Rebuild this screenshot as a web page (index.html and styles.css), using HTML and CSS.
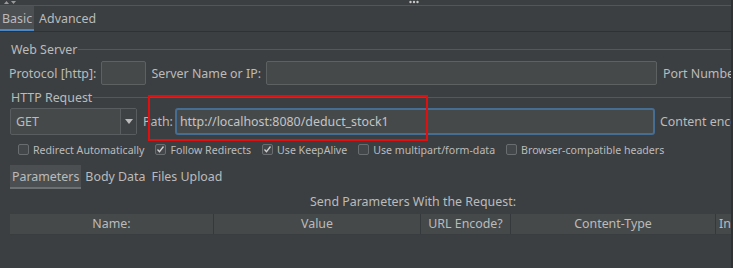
FILE: index.html
```html
<!DOCTYPE html>
<html>
<head>
<meta charset="utf-8">
<link rel="stylesheet" href="styles.css">
</head>
<body>
<div class="app">
  <div class="topbar">
    <svg class="arrows" width="12" height="5" viewBox="0 0 12 5"><path d="M0 4L2.5 1L5 4z" fill="#9a9a9a"/><path d="M7 1h5L9.5 4z" fill="#9a9a9a"/></svg>
    <svg class="dots" width="10" height="4" viewBox="0 0 10 4"><circle cx="1.5" cy="2" r="1.2" fill="#c8c8c8"/><circle cx="5" cy="2" r="1.2" fill="#c8c8c8"/><circle cx="8.5" cy="2" r="1.2" fill="#c8c8c8"/></svg>
  </div>
  <div class="tabs">
    <div class="tab active">Basic</div>
    <div class="tab">Advanced</div>
  </div>
  <div class="group">
    <div class="legend first"><span>Web Server</span><i></i></div>
    <div class="row">
      <span class="lbl">Protocol [http]:</span>
      <span class="input proto"></span>
      <span class="lbl">Server Name or IP:</span>
      <span class="input server"></span>
      <span class="lbl">Port Number:</span>
    </div>
  </div>
  <div class="group">
    <div class="legend second"><span>HTTP Request</span><i></i></div>
    <div class="row row2">
      <div class="select"><span class="sel-text">GET</span><span class="sel-arrow"><svg width="8" height="5" viewBox="0 0 8 5"><path d="M0 0h8L4 5z" fill="#bbbbbb"/></svg></span></div>
      <span class="lbl path-lbl">Path:</span>
      <span class="input path">http://localhost:8080/deduct_stock1</span>
      <span class="lbl">Content encoding:</span>
      <div class="highlight"></div>
    </div>
    <div class="checks">
      <label class="chk"><span class="box"></span>Redirect Automatically</label>
      <label class="chk"><span class="box on"><svg width="9" height="9" viewBox="0 0 9 9"><path d="M1.5 4.5l2 2.2L7.5 1.5" stroke="#cfcfcf" stroke-width="1.3" fill="none"/></svg></span>Follow Redirects</label>
      <label class="chk"><span class="box on"><svg width="9" height="9" viewBox="0 0 9 9"><path d="M1.5 4.5l2 2.2L7.5 1.5" stroke="#cfcfcf" stroke-width="1.3" fill="none"/></svg></span>Use KeepAlive</label>
      <label class="chk"><span class="box"></span>Use multipart/form-data</label>
      <label class="chk"><span class="box"></span>Browser-compatible headers</label>
    </div>
  </div>
  <div class="subtabs">
    <div class="stab active">Parameters</div>
    <div class="stab">Body Data</div>
    <div class="stab">Files Upload</div>
  </div>
  <div class="caption">Send Parameters With the Request:</div>
  <div class="thead">
    <div class="th c1">Name:</div>
    <div class="th c2">Value</div>
    <div class="th c3">URL Encode?</div>
    <div class="th c4">Content-Type</div>
    <div class="th c5">In</div>
  </div>
</div>
</body>
</html>
```
FILE: styles.css
```css
html, body {
  margin: 0;
  padding: 0;
  background: #3c3f41;
}
.app {
  width: 733px;
  height: 268px;
  overflow: hidden;
  position: relative;
  background: #3c3f41;
  color: #bbbbbb;
  font-family: "Noto Sans", "Open Sans", sans-serif;
  font-size: 12.4px;
  border-right: 2px solid #2f3133;
  box-sizing: border-box;
}
.topbar {
  height: 5px;
  border-bottom: 1px solid #515658;
  position: relative;
}
.arrows {
  position: absolute;
  left: 4px;
  top: 0;
}
.dots {
  position: absolute;
  left: 409px;
  top: 0;
}
.tabs {
  display: flex;
  height: 25px;
  border-bottom: 1px solid #2f3133;
  gap: 3px;
}
.tab {
  padding: 0 2px;
  line-height: 25px;
}
.tab.active {
  background: #4b4f51;
  box-shadow: inset 0 -2px 0 #4a88c7;
  padding: 0 2px;
}
.group {
  padding-left: 9px;
}
.legend {
  display: flex;
  align-items: center;
  height: 16px;
}
.legend.first { margin-top: 9px; }
.legend.second { margin-top: 4px; }
.legend span {
  padding-left: 2px;
  padding-right: 1px;
}
.legend i {
  flex: 1;
  height: 1px;
  background: #53585a;
  margin-top: 1px;
}
.row {
  display: flex;
  align-items: center;
  height: 24px;
  margin-top: 4px;
  white-space: nowrap;
  position: relative;
}
.lbl { flex: none; }
.input {
  display: block;
  box-sizing: border-box;
  height: 24px;
  background: #45494a;
  border: 1px solid #5e6162;
  border-radius: 2px;
  flex: none;
}
.proto { width: 45px; margin: 0 5px 0 5px; }
.server { width: 391px; margin: 0 6px 0 5px; }
.row2 {
  height: 27px;
  margin-top: 3px;
}
.select {
  display: flex;
  box-sizing: border-box;
  width: 127px;
  height: 27px;
  margin-left: 1px;
  background: #45494a;
  border: 1px solid #5a5d5f;
  border-radius: 2px;
  flex: none;
}
.sel-text {
  flex: 1;
  padding-left: 5px;
  line-height: 25px;
}
.sel-arrow {
  width: 15px;
  border-left: 1px solid #5a5d5f;
  display: flex;
  align-items: center;
  justify-content: center;
  background: #3f4244;
}
.path-lbl { margin-left: 6px; }
.path {
  width: 480px;
  height: 27px;
  margin: 0 5px 0 2px;
  border: 2px solid #466d94;
  border-radius: 3px;
  padding-left: 3px;
  line-height: 23px;
  color: #c4c4c4;
}
.highlight {
  position: absolute;
  left: 139px;
  top: -13px;
  width: 280px;
  height: 46px;
  box-sizing: border-box;
  border: 2px solid #e01010;
}
.checks {
  display: flex;
  align-items: center;
  height: 17px;
  margin-top: 6px;
  padding-left: 9px;
  font-size: 10.6px;
  white-space: nowrap;
}
.chk {
  display: flex;
  align-items: center;
  margin-right: 11px;
}
.box {
  box-sizing: border-box;
  width: 11px;
  height: 11px;
  border: 1px solid #6a6d6f;
  background: #43474a;
  border-radius: 2px;
  margin-right: 4px;
  display: flex;
  align-items: center;
  justify-content: center;
}
.subtabs {
  display: flex;
  height: 24px;
  margin-top: 7px;
  padding-left: 10px;
  gap: 2px;
}
.stab {
  padding: 0 2px;
  line-height: 23px;
}
.stab.active {
  background: #4b4f51;
  box-shadow: inset 0 -2px 0 #6c7072;
}
.caption {
  text-align: center;
  padding-left: 95px;
  margin-top: 4px;
  height: 18px;
  line-height: 18px;
}
.thead {
  display: flex;
  height: 20px;
  margin-top: 3px;
  margin-left: 10px;
  background: #45494a;
  border-bottom: 1px solid #3a3d3f;
  white-space: nowrap;
}
.th {
  flex: none;
  text-align: center;
  line-height: 20px;
  border-right: 1px solid #36393b;
  overflow: hidden;
}
.c1 { width: 203px; }
.c2 { width: 206px; }
.c3 { width: 89px; }
.c4 { width: 204px; }
.c5 { width: 40px; text-align: left; padding-left: 3px; }
```
